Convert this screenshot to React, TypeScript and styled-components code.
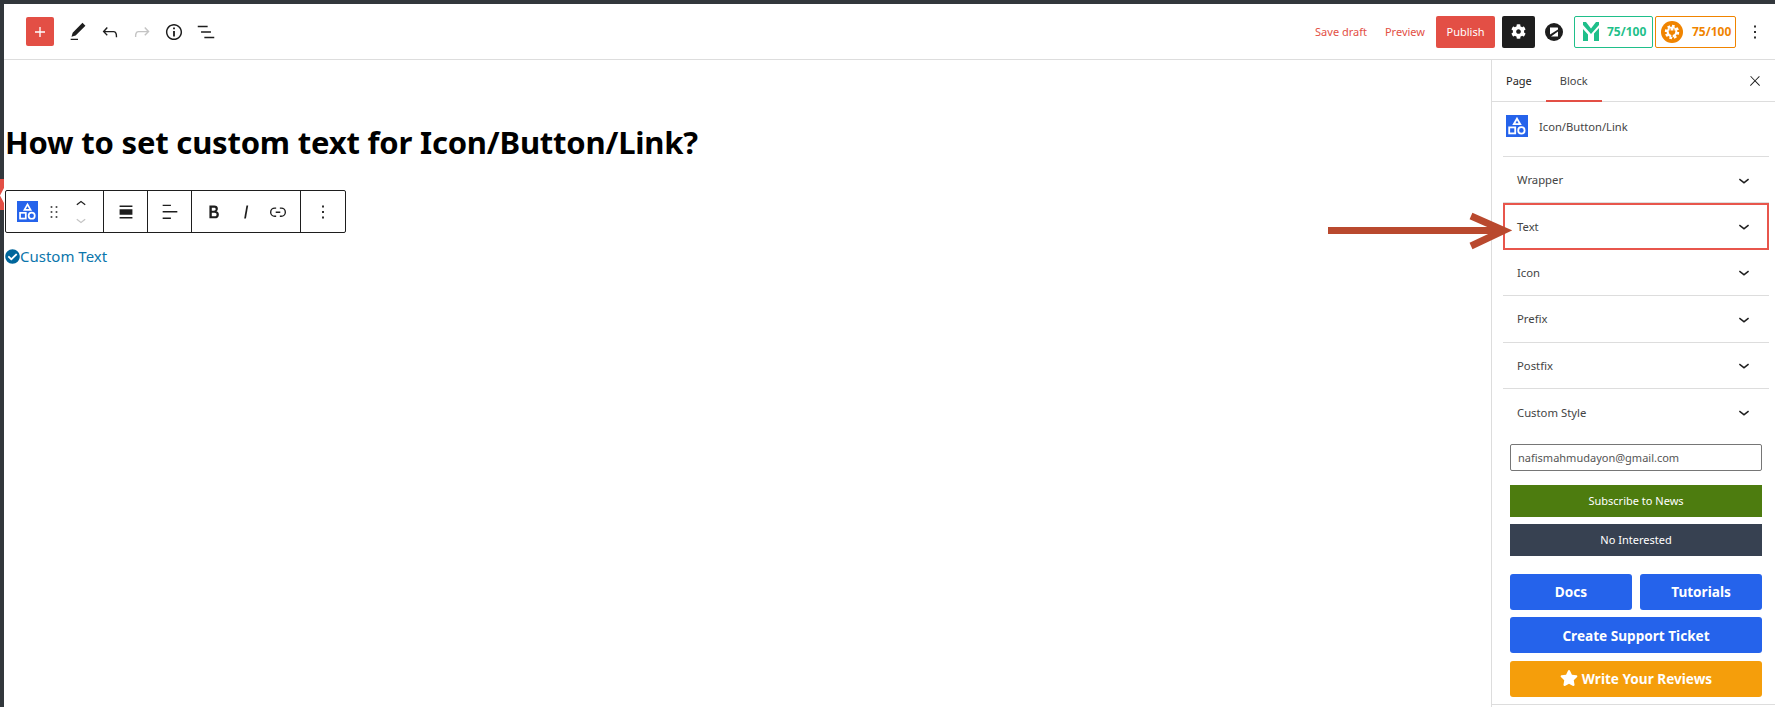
import styled, { createGlobalStyle } from "styled-components";
import { FaCheckCircle, FaCog, FaStar } from "react-icons/fa";

const GlobalStyle = createGlobalStyle`
  html, body {
    margin: 0;
    padding: 0;
    background: #fff;
    height: 100%;
  }
  body {
    font-family: "Noto Sans", "Open Sans", sans-serif;
    color: #1e1e1e;
    overflow: hidden;
  }
`;

const paths = {
  plus: "M18 11.2h-5.2V6h-1.6v5.2H6v1.6h5.2V18h1.6v-5.2H18z",
  pencil: "M20.1 5.1L16.9 2 6.2 12.7l-1.3 4.4 4.5-1.3L20.1 5.1zM4 20.8h8v-1.5H4v1.5z",
  undo: "M18.3 11.7c-.6-.6-1.4-.9-2.3-.9H6.7l2.9-3.3-1.1-1-4.5 5L8.5 16l1-1-2.7-2.7H16c.5 0 .9.2 1.3.5 1 1 1 3.4 1 4.5v.3h1.5v-.2c0-1.5 0-4.3-1.5-5.7z",
  redo: "M15.6 6.5l-1.1 1 2.9 3.3H8c-.9 0-1.7.3-2.3.9-1.4 1.5-1.4 4.2-1.4 5.6v.2h1.5v-.3c0-1.1 0-3.5 1-4.5.3-.3.7-.5 1.3-.5h9.2L14.5 15l1.1 1.1 4.6-4.6-4.6-5z",
  info: "M12 3.2c-4.8 0-8.8 3.9-8.8 8.8 0 4.8 3.9 8.8 8.8 8.8 4.8 0 8.8-3.9 8.8-8.8 0-4.8-4-8.8-8.8-8.8zm0 16c-4 0-7.2-3.3-7.2-7.2C4.8 8 8 4.8 12 4.8s7.2 3.3 7.2 7.2c0 4-3.2 7.2-7.2 7.2zM11 17h2v-6h-2v6zm0-8h2V7h-2v2z",
  list: "M13.8 5.2H3v1.5h10.8V5.2zm-3.6 12v1.5H21v-1.5H10.2zm7.2-6H6.6v1.5h10.8v-1.5z",
  close: "M13 11.8l6.1-6.3-1-1-6.1 6.2-6.1-6.3-1 1 6.1 6.3-6.5 6.7 1 1 6.5-6.6 6.5 6.7 1-1z",
  more: "M13 19h-2v-2h2v2zm0-6h-2v-2h2v2zm0-6h-2V5h2v2z",
  drag: "M8 7h2V5H8v2zm0 6h2v-2H8v2zm0 6h2v-2H8v2zm6-14v2h2V5h-2zm0 8h2v-2h-2v2zm0 6h2v-2h-2v2z",
  up: "M6.5 12.4L12 8l5.5 4.4-.9 1.2L12 10l-4.5 3.6-1-1.2z",
  down: "M17.5 11.6L12 16l-5.5-4.4.9-1.2L12 14l4.5-3.6 1 1.2z",
  wide: "M5 5h14v1.5H5zM5 9h14v6H5zM5 17.5h14V19H5z",
  alignLeft: "M13 5.5H4V4h9v1.5Zm7 7H4V11h16v1.5Zm-7 7H4V18h9v1.5Z",
  bold: "M14.7 11.3c1-.6 1.5-1.6 1.5-3 0-2.3-1.3-3.4-4-3.4H7v14h5.8c1.4 0 2.5-.3 3.3-1 .8-.7 1.2-1.7 1.2-2.9.1-1.9-.8-3.1-2.6-3.7zm-5.1-4h2.3c.6 0 1.1.1 1.4.4.3.3.5.7.5 1.2s-.2 1-.5 1.2c-.3.3-.8.4-1.4.4H9.6V7.3zm4.6 9c-.4.3-1 .4-1.7.4H9.6v-3.9h2.9c.7 0 1.3.2 1.7.5.4.3.6.8.6 1.5s-.2 1.2-.6 1.5z",
  italic: "M12.5 5L10 19h1.9l2.5-14z",
  link: "M10 17.389H8.444A5.194 5.194 0 1 1 8.444 7H10v1.5H8.444a3.694 3.694 0 0 0 0 7.389H10v1.5ZM14 7h1.556a5.194 5.194 0 0 1 0 10.39H14v-1.5h1.556a3.694 3.694 0 0 0 0-7.39H14V7Zm-4.5 6h5v-1.5h-5V13Z",
};

const Glyph = styled.svg<{ $size?: number; $color?: string }>`
  display: block;
  flex: none;
  width: ${(p) => p.$size ?? 22}px;
  height: ${(p) => p.$size ?? 22}px;
  fill: ${(p) => p.$color ?? "#1e1e1e"};
`;

const Icon = ({ name, size, color }: { name: keyof typeof paths; size?: number; color?: string }) => (
  <Glyph viewBox="0 0 24 24" $size={size} $color={color}>
    <path d={paths[name]} />
  </Glyph>
);

const BlockGlyph = styled.svg`
  display: block;
  flex: none;
`;

const BlockIcon = ({ size }: { size: number }) => (
  <BlockGlyph width={size} height={size} viewBox="0 0 22 22">
    <rect width="22" height="22" fill="#2563eb" />
    <path d="M11 3.6 14.2 9.2H7.8Z" fill="none" stroke="#fff" strokeWidth="1.8" />
    <rect x="3.2" y="12.4" width="6" height="6" fill="none" stroke="#fff" strokeWidth="1.8" />
    <circle cx="15.4" cy="15.4" r="3.2" fill="none" stroke="#fff" strokeWidth="1.8" />
  </BlockGlyph>
);

const Page = styled.div`
  width: 1775px;
  height: 707px;
  display: flex;
  flex-direction: column;
  overflow: hidden;
`;

const TopStrip = styled.div`
  height: 4px;
  flex: none;
  background: #32373c;
`;

const Frame = styled.div`
  flex: 1;
  display: flex;
  min-height: 0;
`;

const AdminEdge = styled.div`
  position: relative;
  width: 4px;
  flex: none;
  background: #32373c;
`;

const MenuMarker = styled.svg`
  position: absolute;
  left: 0;
  top: 175px;
  display: block;
`;

const Workspace = styled.div`
  position: relative;
  flex: 1;
  display: flex;
  flex-direction: column;
  min-width: 0;
`;

const TopBar = styled.header`
  height: 55px;
  flex: none;
  box-sizing: content-box;
  border-bottom: 1px solid #ddd;
  display: flex;
  align-items: center;
  justify-content: space-between;
  padding: 0 4px 0 22px;
`;

const BarGroup = styled.div`
  display: flex;
  align-items: center;
`;

const AddButton = styled.button`
  width: 28px;
  height: 29px;
  margin-right: 8px;
  padding: 0;
  border: 0;
  border-radius: 2px;
  background: #e34f45;
  display: flex;
  align-items: center;
  justify-content: center;
`;

const ToolButton = styled.button`
  width: 32px;
  height: 32px;
  padding: 0;
  border: 0;
  background: none;
  display: flex;
  align-items: center;
  justify-content: center;
`;

const MoreButton = styled(ToolButton)`
  margin-left: 1px;
`;

const TextAction = styled.span`
  font-size: 11px;
  color: #e34f45;
  margin-right: 18px;
`;

const PublishButton = styled.button`
  width: 59px;
  height: 32px;
  padding: 0;
  margin: 0 7px 0 -7px;
  border: 0;
  border-radius: 2px;
  background: #e34f45;
  color: #fff;
  font: 11px "Noto Sans", sans-serif;
`;

const SettingsButton = styled.button`
  width: 33px;
  height: 32px;
  padding: 0;
  border: 0;
  border-radius: 2px;
  background: #1e1e1e;
  color: #fff;
  display: flex;
  align-items: center;
  justify-content: center;
  font-size: 15px;
`;

const ScoreBadge = styled.div<{ $color: string; $gap: number; $left: number; $width: number }>`
  box-sizing: border-box;
  width: ${(p) => p.$width}px;
  height: 32px;
  border: 1px solid ${(p) => p.$color};
  border-radius: 2px;
  margin-right: 2px;
  padding-left: ${(p) => p.$left}px;
  display: flex;
  align-items: center;
  gap: ${(p) => p.$gap}px;
  color: ${(p) => p.$color};
  font-size: 12px;
  font-weight: 700;
`;

const LogoMark = styled.svg`
  display: block;
  flex: none;
  margin: 0 11px 0 10px;
`;

const Body = styled.div`
  flex: 1;
  display: flex;
  min-height: 0;
`;

const Editor = styled.main`
  flex: 1;
  min-width: 0;
  padding-left: 1px;
`;

const Title = styled.h1`
  margin: 60px 0 26px;
  font-size: 31px;
  line-height: 44px;
  letter-spacing: -0.2px;
  font-weight: 700;
  color: #000;
`;

const BlockToolbar = styled.div`
  box-sizing: border-box;
  width: 341px;
  height: 43px;
  border: 1px solid #1e1e1e;
  border-radius: 2px;
  display: flex;
`;

const ToolGroup = styled.div<{ $width: number; $last?: boolean; $start?: boolean }>`
  box-sizing: border-box;
  width: ${(p) => p.$width}px;
  flex: none;
  display: flex;
  align-items: center;
  justify-content: ${(p) => (p.$start ? "flex-start" : "center")};
  padding-left: ${(p) => (p.$start ? "11px" : "0")};
  border-right: ${(p) => (p.$last ? "0" : "1px solid #1e1e1e")};
`;

const ToolSlot = styled.span<{ $width: number }>`
  width: ${(p) => p.$width}px;
  display: flex;
  justify-content: center;
`;

const Movers = styled.span`
  width: 22px;
  display: flex;
  flex-direction: column;
  align-items: center;
  & > svg + svg {
    margin-top: -4px;
  }
`;

const CustomLink = styled.a`
  display: flex;
  align-items: center;
  margin-top: 12px;
  height: 22px;
  font-size: 15px;
  color: #0b76ac;
  & > svg {
    width: 15px;
    height: 15px;
    color: #00669b;
    flex: none;
  }
`;

const Sidebar = styled.aside`
  box-sizing: border-box;
  width: 284px;
  flex: none;
  border-left: 1px solid #ddd;
  display: flex;
  flex-direction: column;
`;

const Tabs = styled.div`
  box-sizing: border-box;
  height: 42px;
  flex: none;
  border-bottom: 1px solid #ddd;
  display: flex;
  align-items: stretch;
`;

const Tab = styled.div<{ $active?: boolean }>`
  padding: 0 14px 2px;
  display: flex;
  align-items: center;
  font-size: 11px;
  color: ${(p) => (p.$active ? "#444" : "#1e1e1e")};
  box-shadow: ${(p) => (p.$active ? "inset 0 -2px 0 #e34f45" : "none")};
  margin-bottom: -1px;
`;

const CloseButton = styled.span`
  margin-left: auto;
  margin-right: 12px;
  align-self: center;
`;

const BlockCard = styled.div`
  box-sizing: border-box;
  height: 55px;
  margin: 0 6px 0 11px;
  padding: 0 0 6px 3px;
  border-bottom: 1px solid #ddd;
  display: flex;
  align-items: center;
  gap: 11px;
  font-size: 11.2px;
  color: #444;
`;

const PanelRow = styled.div<{ $highlight?: boolean; $plain?: boolean }>`
  box-sizing: border-box;
  height: 46.4px;
  margin: 0 6px 0 11px;
  padding: 0 14px;
  display: flex;
  align-items: center;
  justify-content: space-between;
  font-size: 11.3px;
  color: #444;
  border-bottom: ${(p) => (p.$plain ? "0" : "1px solid #ddd")};
  outline: ${(p) => (p.$highlight ? "2px solid #e8564c" : "none")};
  outline-offset: -2px;
`;

const Promo = styled.div`
  padding: 8.6px 13px 0 18px;
  display: flex;
  flex-direction: column;
`;

const EmailField = styled.div`
  box-sizing: border-box;
  height: 27px;
  border: 1px solid #767676;
  border-radius: 2px;
  padding-left: 7px;
  display: flex;
  align-items: center;
  font-size: 11px;
  color: #555;
  margin-bottom: 14px;
`;

const NewsButton = styled.div<{ $bg: string }>`
  height: 32px;
  margin-bottom: 7px;
  display: flex;
  align-items: center;
  justify-content: center;
  background: ${(p) => p.$bg};
  color: #fff;
  font-size: 11px;
`;

const LinkGrid = styled.div`
  display: grid;
  grid-template-columns: 1fr 1fr;
  gap: 7.5px 8px;
  margin-top: 11px;
`;

const LinkButton = styled.div<{ $bg?: string; $wide?: boolean }>`
  height: 36px;
  grid-column: ${(p) => (p.$wide ? "1 / -1" : "auto")};
  border-radius: 3px;
  background: ${(p) => p.$bg ?? "#2563eb"};
  color: #fff;
  font-size: 13.6px;
  font-weight: 700;
  display: flex;
  align-items: center;
  justify-content: center;
  gap: 4px;
  & > svg {
    width: 18px;
    height: 18px;
    margin-top: -2px;
  }
`;

const SidebarFoot = styled.div`
  margin-top: 7px;
  border-top: 1px solid #ddd;
`;

const Arrow = styled.svg`
  position: absolute;
  left: 1324px;
  top: 208px;
  display: block;
  pointer-events: none;
`;

const panels = ["Wrapper", "Text", "Icon", "Prefix", "Postfix", "Custom Style"];

export default function App() {
  return (
    <Page>
      <GlobalStyle />
      <TopStrip />
      <Frame>
        <AdminEdge>
          <MenuMarker width="4" height="31" viewBox="0 0 4 31">
            <rect width="4" height="31" fill="#e34f45" />
            <path d="M4 9 0 16.5 4 24Z" fill="#fff" />
          </MenuMarker>
        </AdminEdge>
        <Workspace>
          <TopBar>
            <BarGroup>
              <AddButton>
                <Icon name="plus" size={20} color="#fff" />
              </AddButton>
              <ToolButton><Icon name="pencil" /></ToolButton>
              <ToolButton><Icon name="undo" /></ToolButton>
              <ToolButton><Icon name="redo" color="#c4c4c4" /></ToolButton>
              <ToolButton><Icon name="info" /></ToolButton>
              <ToolButton><Icon name="list" /></ToolButton>
            </BarGroup>
            <BarGroup>
              <TextAction>Save draft</TextAction>
              <TextAction>Preview</TextAction>
              <PublishButton>Publish</PublishButton>
              <SettingsButton><FaCog /></SettingsButton>
              <LogoMark width="18" height="18" viewBox="0 0 18 18">
                <circle cx="9" cy="9" r="9" fill="#1e1e1e" />
                <path d="M5 4.5h7.5a.5.5 0 0 1 .5.5v1.5L5 11.5ZM13 8.5v5H6Z" fill="#fff" />
              </LogoMark>
              <ScoreBadge $color="#1fbf8a" $left={8} $gap={8} $width={79}>
                <svg width="16" height="19" viewBox="0 0 16 19">
                  <path d="M0 0H3L8 6.5 13 0H16V3L8 12 0 3ZM0 7 5 12.5V19H0ZM16 6V19H11V11.5Z" fill="#1fbf8a" />
                </svg>
                75/100
              </ScoreBadge>
              <ScoreBadge $color="#f08400" $left={5} $gap={9} $width={81}>
                <svg width="22" height="22" viewBox="0 0 22 22">
                  <circle cx="11" cy="11" r="11" fill="#f08400" />
                  <circle cx="11" cy="11" r="6" fill="none" stroke="#fff" strokeWidth="2.4" strokeDasharray="2.6 2" />
                  <circle cx="11" cy="11" r="5.4" fill="#fff" />
                  <path d="M8.6 7.5h1v2h2.8v-2h1v2h.9v1.6a3.2 3.2 0 0 1-2.6 3V16h-1.4v-1.9a3.2 3.2 0 0 1-2.6-3V9.5h.9Z" fill="#f08400" />
                </svg>
                75/100
              </ScoreBadge>
              <MoreButton><Icon name="more" /></MoreButton>
            </BarGroup>
          </TopBar>
          <Body>
            <Editor>
              <Title>How to set custom text for Icon/Button/Link?</Title>
              <BlockToolbar>
                <ToolGroup $width={98} $start>
                  <BlockIcon size={21} />
                  <ToolSlot $width={32}><Icon name="drag" size={20} /></ToolSlot>
                  <Movers>
                    <Icon name="up" size={20} />
                    <Icon name="down" size={20} color="#c4c4c4" />
                  </Movers>
                </ToolGroup>
                <ToolGroup $width={44}><Icon name="wide" /></ToolGroup>
                <ToolGroup $width={44}><Icon name="alignLeft" /></ToolGroup>
                <ToolGroup $width={109}>
                  <ToolSlot $width={32}><Icon name="bold" /></ToolSlot>
                  <ToolSlot $width={32}><Icon name="italic" /></ToolSlot>
                  <ToolSlot $width={32}><Icon name="link" /></ToolSlot>
                </ToolGroup>
                <ToolGroup $width={44} $last><Icon name="more" /></ToolGroup>
              </BlockToolbar>
              <CustomLink>
                <FaCheckCircle />
                Custom Text
              </CustomLink>
            </Editor>
            <Sidebar>
              <Tabs>
                <Tab>Page</Tab>
                <Tab $active>Block</Tab>
                <CloseButton><Icon name="close" size={16} /></CloseButton>
              </Tabs>
              <BlockCard>
                <BlockIcon size={22} />
                Icon/Button/Link
              </BlockCard>
              {panels.map((label, i) => (
                <PanelRow key={label} $highlight={label === "Text"} $plain={i === panels.length - 1}>
                  {label}
                  <Icon name="down" size={22} />
                </PanelRow>
              ))}
              <Promo>
                <EmailField>nafismahmudayon@gmail.com</EmailField>
                <NewsButton $bg="#4d7c0f">Subscribe to News</NewsButton>
                <NewsButton $bg="#374151">No Interested</NewsButton>
                <LinkGrid>
                  <LinkButton>Docs</LinkButton>
                  <LinkButton>Tutorials</LinkButton>
                  <LinkButton $wide>Create Support Ticket</LinkButton>
                  <LinkButton $wide $bg="#f59e0b"><FaStar />Write Your Reviews</LinkButton>
                </LinkGrid>
              </Promo>
              <SidebarFoot />
            </Sidebar>
          </Body>
          <Arrow width="184" height="44" viewBox="0 0 184 44">
            <path d="M0 18.5H172" stroke="#b9492e" strokeWidth="7" fill="none" />
            <path d="M143 4 176 18.5 143 34" stroke="#b9492e" strokeWidth="7" fill="none" />
          </Arrow>
        </Workspace>
      </Frame>
    </Page>
  );
}
